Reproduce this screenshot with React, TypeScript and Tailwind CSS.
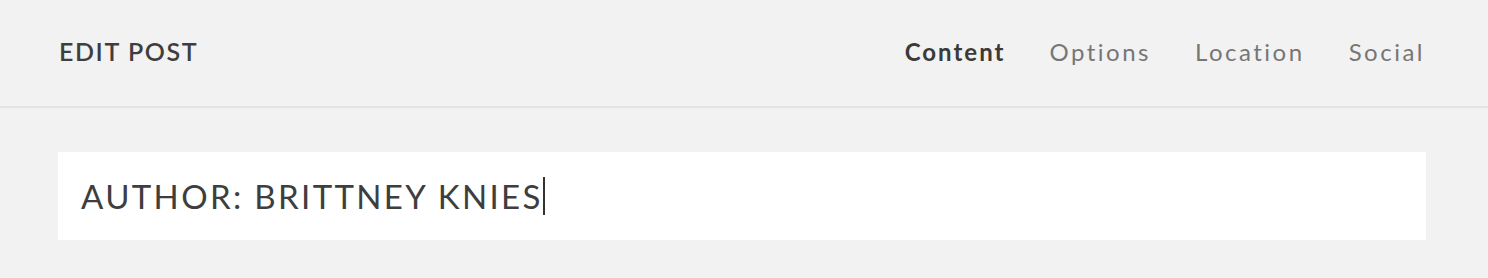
import React from "react";

export default function App() {
  const tabs = [
    { label: "Content", active: true },
    { label: "Options", active: false },
    { label: "Location", active: false },
    { label: "Social", active: false },
  ];
  return (
    <div
      className="w-[1488px] h-[278px] bg-[#f2f2f2] text-[#3e3e3e]"
      style={{ fontFamily: "Lato, 'Open Sans', Arial, sans-serif" }}
    >
      <header className="h-[108px] flex items-center justify-between pl-[59px] pr-[63px] pb-[3px] border-b-2 border-[#e3e3e3]">
        <div className="text-[25px] font-semibold tracking-[1.6px] text-[#3e3e3e] leading-none">
          EDIT POST
        </div>
        <nav className="flex items-center gap-[44px] leading-none">
          {tabs.map((t) => (
            <span
              key={t.label}
              className={
                t.active
                  ? "text-[24px] font-bold tracking-[2px] text-[#3a3a3a]"
                  : "text-[24px] font-normal tracking-[2.5px] text-[#767676]"
              }
            >
              {t.label}
            </span>
          ))}
        </nav>
      </header>
      <main className="pl-[58px] pr-[62px] pt-[44px]">
        <div className="h-[88px] bg-white flex items-center pl-[23px]">
          <span className="text-[33px] leading-none tracking-[2.35px] text-[#3e3e3e]">
            AUTHOR: BRITTNEY KNIES
          </span>
          <span className="w-[2px] h-[38px] bg-[#333333]" />
        </div>
      </main>
    </div>
  );
}
